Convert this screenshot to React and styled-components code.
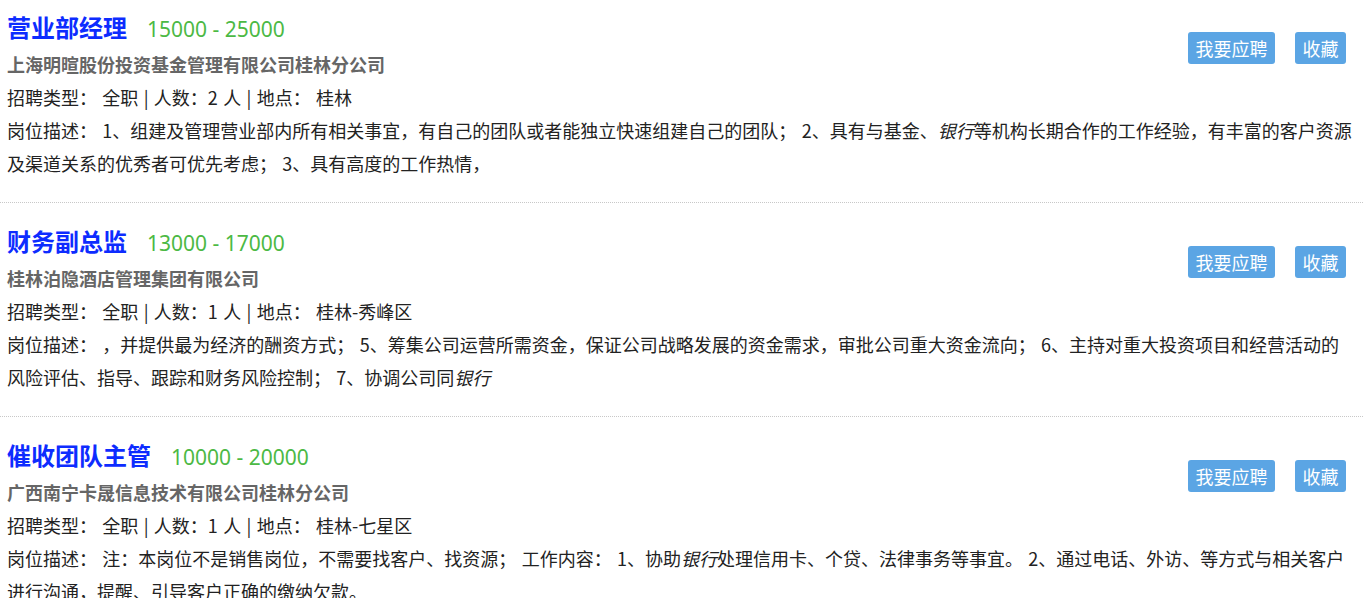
import React from "react";
import styled, { createGlobalStyle } from "styled-components";

const GlobalStyle = createGlobalStyle`
  html, body { margin: 0; padding: 0; background: #fff; }
  body {
    font-family: "Noto Sans CJK SC", sans-serif;
    color: #222;
    overflow: hidden;
  }
`;

const List = styled.div`
  width: 1363px;
`;

const Job = styled.div`
  padding: 17px 10px 22px 7px;
  border-bottom: 1px dotted #c8c8c8;
  &:first-child { padding-top: 6px; }
`;

const Head = styled.div`
  display: grid;
  grid-template-columns: 1fr auto;
  align-items: start;
`;

const HeadText = styled.div``;

const TitleLine = styled.div`
  display: flex;
  align-items: baseline;
  height: 41px;
  line-height: 41px;
  white-space: nowrap;
`;

const Title = styled.a`
  font-size: 24px;
  font-weight: 700;
  color: #0d2cff;
  text-decoration: none;
`;

const Salary = styled.span`
  margin-left: 20px;
  font-size: 21px;
  color: #4cb944;
  font-family: "Noto Sans", sans-serif;
`;

const Company = styled.div`
  font-size: 18px;
  height: 34px;
  line-height: 34px;
  font-weight: 700;
  color: #666;
`;

const Actions = styled.div`
  display: flex;
  gap: 20px;
  margin-top: 26px;
  margin-right: 7px;
`;

const Button = styled.button`
  height: 32px;
  padding: 0 7.5px;
  border: none;
  border-radius: 3px;
  background: #5ba5e4;
  color: #fff;
  font-family: "Noto Sans CJK SC", sans-serif;
  font-size: 18px;
  line-height: 32px;
  cursor: pointer;
`;

const Line = styled.div`
  font-size: 18px;
  line-height: 33px;
  word-spacing: 1.3px;
`;

const Hl = styled.em`
  font-style: italic;
`;

const jobs = [
  {
    title: "营业部经理",
    salary: "15000 - 25000",
    company: "上海明暄股份投资基金管理有限公司桂林分公司",
    count: "2",
    place: "桂林",
    desc: [
      "岗位描述： 1、组建及管理营业部内所有相关事宜，有自己的团队或者能独立快速组建自己的团队； 2、具有与基金、",
      "银行",
      "等机构长期合作的工作经验，有丰富的客户资源及渠道关系的优秀者可优先考虑； 3、具有高度的工作热情，",
    ],
  },
  {
    title: "财务副总监",
    salary: "13000 - 17000",
    company: "桂林泊隐酒店管理集团有限公司",
    count: "1",
    place: "桂林-秀峰区",
    desc: [
      "岗位描述： ，并提供最为经济的酬资方式； 5、筹集公司运营所需资金，保证公司战略发展的资金需求，审批公司重大资金流向； 6、主持对重大投资项目和经营活动的风险评估、指导、跟踪和财务风险控制； 7、协调公司同",
      "银行",
      "",
    ],
  },
  {
    title: "催收团队主管",
    salary: "10000 - 20000",
    company: "广西南宁卡晟信息技术有限公司桂林分公司",
    count: "1",
    place: "桂林-七星区",
    desc: [
      "岗位描述： 注：本岗位不是销售岗位，不需要找客户、找资源； 工作内容： 1、协助",
      "银行",
      "处理信用卡、个贷、法律事务等事宜。 2、通过电话、外访、等方式与相关客户进行沟通，提醒、引导客户正确的缴纳欠款。",
    ],
  },
];

export default function App() {
  return (
    <>
      <GlobalStyle />
      <List>
        {jobs.map((j) => (
          <Job key={j.title}>
            <Head>
              <HeadText>
                <TitleLine>
                  <Title href="#">{j.title}</Title>
                  <Salary>{j.salary}</Salary>
                </TitleLine>
                <Company>{j.company}</Company>
              </HeadText>
              <Actions>
                <Button>我要应聘</Button>
                <Button>收藏</Button>
              </Actions>
            </Head>
            <Line>
              招聘类型： 全职 | 人数：{j.count} 人 | 地点： {j.place}
            </Line>
            <Line>
              {j.desc[0]}
              <Hl>{j.desc[1]}</Hl>
              {j.desc[2]}
            </Line>
          </Job>
        ))}
      </List>
    </>
  );
}
